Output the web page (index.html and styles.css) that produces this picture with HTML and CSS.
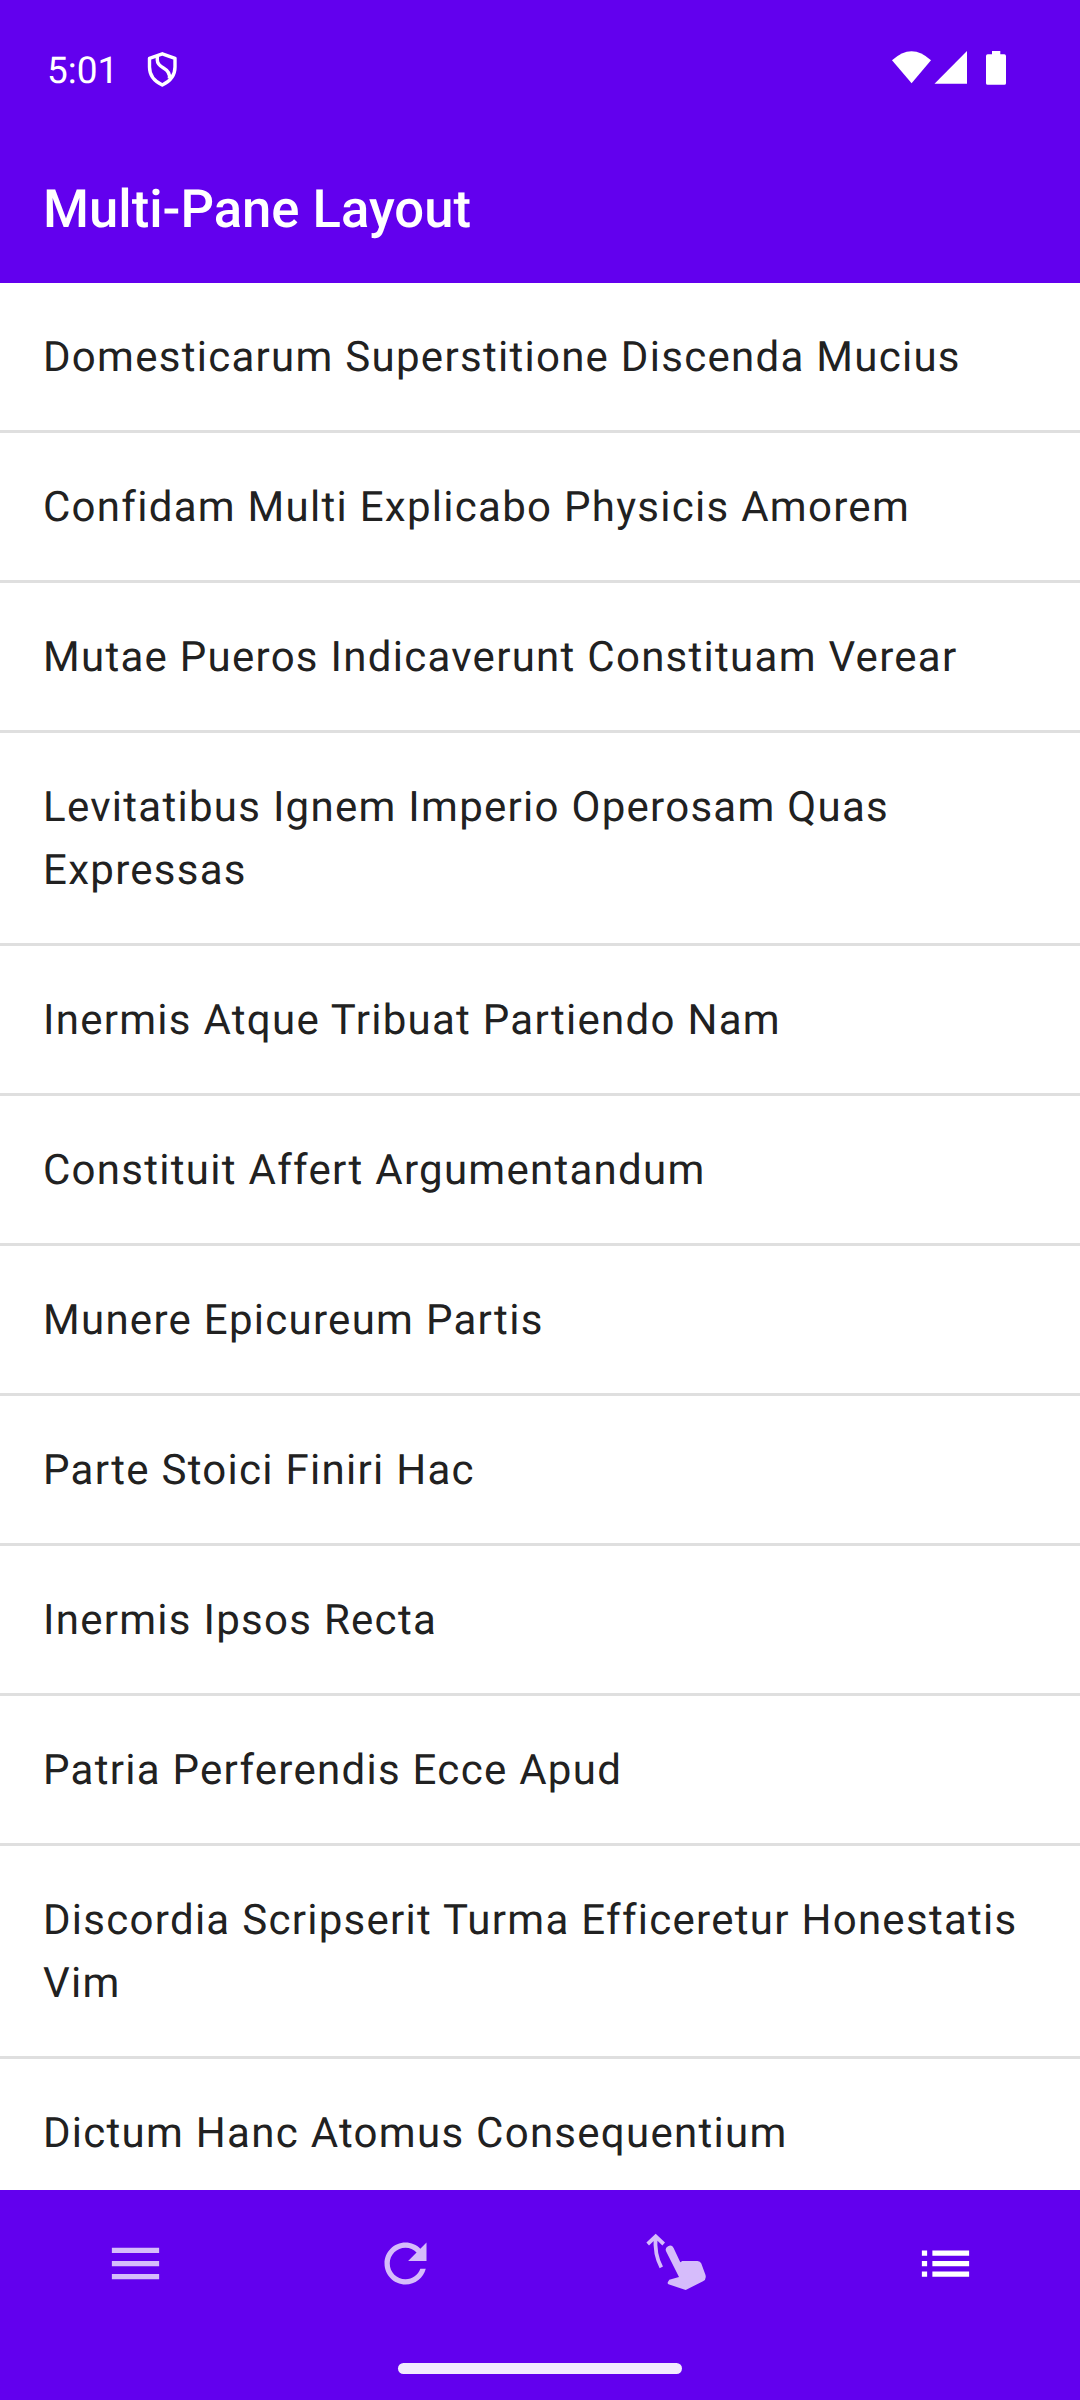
FILE: index.html
```html
<!DOCTYPE html>
<html lang="la">
<head>
<meta charset="utf-8">
<title>Multi-Pane Layout</title>
<link rel="stylesheet" href="styles.css">
</head>
<body>
<div class="screen">
<header class="header">
<div class="status">
<span class="clock">5:01</span>
<svg class="shield" width="31" height="36" viewBox="0 0 31 36" fill="none" stroke="#fff" stroke-width="3.4" stroke-linejoin="round"><path d="M15.3 2.8 28 7.3V16Q28 28 15.3 34Q2.5 28 2.5 16V7.3Z"/><path d="M10.3 5V9Q10.3 13.500 16.500 17Q23.500 21 22.300 27.500"/></svg>
<svg class="signals" width="118" height="36" viewBox="0 0 118 36" fill="#fff"><path d="M2 10.300Q21.600-8 41 10.300L21.600 33.300Z"/><path d="M44.500 33.700 77 1V33.700Z"/><path d="M102 1h8.300v3.300h4q1.700 0 1.700 1.700v27.300q0 1.500-1.700 1.500H97.700q-1.700 0-1.700-1.500V6q0-1.700 1.700-1.700h4.300Z"/></svg>
</div>
<h1 class="title">Multi-Pane Layout</h1>
</header>
<main class="list">
<div class="item">Domesticarum Superstitione Discenda Mucius</div>
<div class="item">Confidam Multi Explicabo Physicis Amorem</div>
<div class="item">Mutae Pueros Indicaverunt Constituam Verear</div>
<div class="item">Levitatibus Ignem Imperio Operosam Quas Expressas</div>
<div class="item">Inermis Atque Tribuat Partiendo Nam</div>
<div class="item">Constituit Affert Argumentandum</div>
<div class="item">Munere Epicureum Partis</div>
<div class="item">Parte Stoici Finiri Hac</div>
<div class="item">Inermis Ipsos Recta</div>
<div class="item">Patria Perferendis Ecce Apud</div>
<div class="item">Discordia Scripserit Turma Efficeretur Honestatis Vim</div>
<div class="item">Dictum Hanc Atomus Consequentium</div>
</main>
<footer class="footer">
<nav class="nav">
<div class="tab"><svg width="63" height="63" viewBox="0 0 24 24"><path d="M3 18h18v-2H3v2zm0-5h18v-2H3v2zm0-7v2h18V6H3z"/></svg></div>
<div class="tab"><svg width="63" height="63" viewBox="0 0 24 24"><path d="M17.65 6.35C16.2 4.9 14.21 4 12 4c-4.42 0-7.99 3.58-7.99 8s3.57 8 7.99 8c3.73 0 6.84-2.55 7.73-6h-2.08c-.82 2.33-3.04 4-5.65 4-3.31 0-6-2.69-6-6s2.69-6 6-6c1.66 0 3.14.69 4.22 1.78L13 11h7V4l-2.35 2.35z"/></svg></div>
<div class="tab"><svg width="63" height="63" viewBox="0 0 63 63"><path d="M29.600 16 36.300 30.300 38.300 29H53.500Q56.300 29 57.300 31.500L61.500 43Q62.600 47.300 59 49.200L41.700 58 24.500 52.300Q23.200 51.500 23.900 50L25.300 47.700 35 45 22.300 19.800A4 4 0 0 1 29.600 16Z"/><path class="stroke" d="M3.700 12 11.700 4.400 19.700 12M11.600 5Q10.300 22.500 17.300 35.300"/></svg></div>
<div class="tab active"><svg width="63" height="63" viewBox="0 0 24 24"><path d="M3 13h2v-2H3v2zm0 4h2v-2H3v2zm0-8h2V7H3v2zm4 4h14v-2H7v2zm0 4h14v-2H7v2zM7 7v2h14V7H7z"/></svg></div>
</nav>
<div class="handle"></div>
</footer>
</div>
</body>
</html>
```
FILE: styles.css
```css
body{margin:0;font-family:Roboto,sans-serif;text-rendering:geometricPrecision}
.screen{width:1080px;height:2400px;display:flex;flex-direction:column;overflow:hidden;background:#fff}
.header{height:283px;flex:none;background:#6200ee;color:#fff}
.status{height:136px;box-sizing:border-box;display:flex;align-items:center;padding:0 72px 0 47px}
.clock{font-size:37px;padding-top:6px}
.shield{margin:2px 0 0 29px}
.signals{margin-left:auto}
.title{margin:0;padding-left:43px;font-size:52.6px;font-weight:500;line-height:146px}
.list{flex:1;overflow:hidden}
.item{padding:43px 42px 41px 43px;font-size:42px;line-height:63px;letter-spacing:1.28px;color:#212121;border-bottom:3px solid #dfdfdf}
.footer{height:210px;flex:none;background:#6200ee;display:flex;flex-direction:column;align-items:center}
.nav{height:147px;width:100%;display:grid;grid-template-columns:repeat(4,1fr)}
.tab{display:flex;align-items:center;justify-content:center;padding-left:1px;fill:#d6bcfb}
.stroke{fill:none;stroke:#d6bcfb;stroke-width:3.8}
.active{fill:#fff}
.handle{margin-top:26px;width:284px;height:11px;border-radius:5.5px;background:#f2eafe}
```
